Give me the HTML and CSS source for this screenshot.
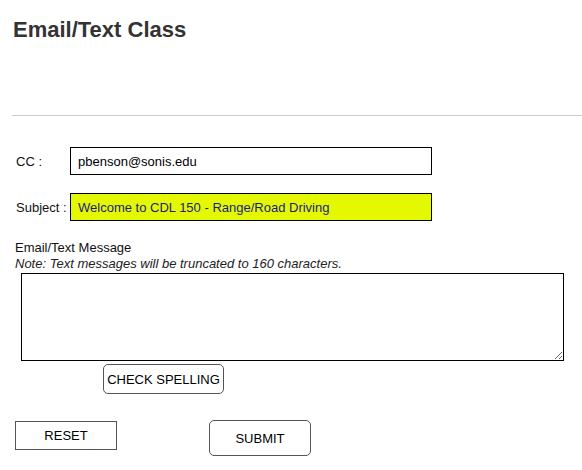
FILE: index.html
```html
<!DOCTYPE html>
<html>
<head>
<meta charset="utf-8">
<link rel="stylesheet" href="styles.css">
</head>
<body>
<div class="page">
  <h1 class="title">Email/Text Class</h1>
  <hr class="rule">
  <form class="form">
    <div class="field-row">
      <label class="field-label">CC :</label>
      <input class="text-input" type="text" value="pbenson@sonis.edu">
    </div>
    <div class="field-row subject-row">
      <label class="field-label">Subject :</label>
      <input class="text-input subject-input" type="text" value="Welcome to CDL 150 - Range/Road Driving">
    </div>
    <div class="message-label">Email/Text Message</div>
    <div class="message-note">Note: Text messages will be truncated to 160 characters.</div>
    <textarea class="message-box"></textarea>
    <div class="spell-row">
      <button type="button" class="btn btn-spell">CHECK SPELLING</button>
    </div>
    <div class="action-row">
      <button type="button" class="btn btn-reset">RESET</button>
      <button type="button" class="btn btn-submit">SUBMIT</button>
    </div>
  </form>
</div>
</body>
</html>
```
FILE: styles.css
```css
html, body {
  margin: 0;
  padding: 0;
  background: #ffffff;
}
body {
  font-family: "Liberation Sans", Arial, sans-serif;
  font-size: 13px;
  color: #000;
}
.page {
  width: 582px;
}
.title {
  margin: 17px 0 0 13px;
  font-size: 22px;
  line-height: 26px;
  font-weight: bold;
  color: #333333;
}
.rule {
  margin: 72px 0 0 12px;
  border: 0;
  height: 1px;
  background: #cccccc;
}
.form {
  display: flex;
  flex-direction: column;
  padding-top: 31px;
}
.field-row {
  display: flex;
  align-items: center;
}
.subject-row {
  margin-top: 18px;
}
.field-label {
  width: 54px;
  padding-left: 16px;
  font-size: 13px;
  color: #111;
}
.text-input {
  box-sizing: border-box;
  width: 362px;
  height: 28px;
  margin: 0;
  padding: 0 7px;
  border: 1px solid #000;
  border-radius: 0;
  font-family: "Liberation Sans", Arial, sans-serif;
  font-size: 13px;
  color: #000;
  background: #fff;
  outline: none;
}
.subject-input {
  background: #e4f800;
  color: #1c1c80;
}
.message-label {
  margin: 19px 0 0 15px;
  line-height: 16px;
  font-size: 13px;
  color: #111;
}
.message-note {
  margin-left: 15px;
  line-height: 16px;
  font-size: 13px;
  font-style: italic;
  color: #222;
}
.message-box {
  box-sizing: border-box;
  display: block;
  width: 543px;
  height: 88px;
  margin: 1px 0 0 21px;
  border: 1px solid #000;
  border-radius: 0;
  padding: 2px;
  font-family: "Liberation Sans", Arial, sans-serif;
  font-size: 13px;
  outline: none;
  resize: both;
}
.spell-row {
  display: flex;
  padding-left: 103px;
  margin-top: 3px;
}
.btn {
  box-sizing: border-box;
  margin: 0;
  padding: 0;
  background: #fff;
  border: 1px solid #555;
  font-family: "Liberation Sans", Arial, sans-serif;
  font-size: 13px;
  color: #000;
  cursor: pointer;
}
.btn-spell {
  width: 121px;
  height: 30px;
  border-radius: 5px;
}
.action-row {
  display: flex;
  align-items: flex-start;
  gap: 92px;
  padding-left: 15px;
  margin-top: 26px;
}
.btn-reset {
  width: 102px;
  height: 29px;
  margin-top: 1px;
  border-radius: 0;
}
.btn-submit {
  width: 102px;
  height: 36px;
  border-radius: 5px;
}
```
